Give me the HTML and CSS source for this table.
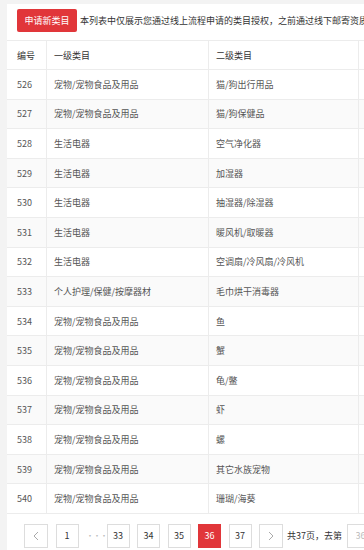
FILE: index.html
```html
<!DOCTYPE html>
<html lang="zh-CN">
<head>
<meta charset="utf-8">
<title>类目授权</title>
<link rel="stylesheet" href="styles.css">
</head>
<body>
<div class="page">
  <div class="panel">
    <div class="toolbar">
      <button class="btn-apply">申请新类目</button>
      <span class="notice">本列表中仅展示您通过线上流程申请的类目授权，之前通过线下邮寄资质</span>
    </div>
    <div class="table">
      <div class="row head">
        <div class="cell c1">编号</div>
        <div class="cell c2">一级类目</div>
        <div class="cell c3">二级类目</div>
        <div class="cell c4"></div>
      </div>
      <div class="row"><div class="cell c1">526</div><div class="cell c2">宠物/宠物食品及用品</div><div class="cell c3">猫/狗出行用品</div><div class="cell c4"></div></div>
      <div class="row odd"><div class="cell c1">527</div><div class="cell c2">宠物/宠物食品及用品</div><div class="cell c3">猫/狗保健品</div><div class="cell c4"></div></div>
      <div class="row"><div class="cell c1">528</div><div class="cell c2">生活电器</div><div class="cell c3">空气净化器</div><div class="cell c4"></div></div>
      <div class="row odd"><div class="cell c1">529</div><div class="cell c2">生活电器</div><div class="cell c3">加湿器</div><div class="cell c4"></div></div>
      <div class="row"><div class="cell c1">530</div><div class="cell c2">生活电器</div><div class="cell c3">抽湿器/除湿器</div><div class="cell c4"></div></div>
      <div class="row odd"><div class="cell c1">531</div><div class="cell c2">生活电器</div><div class="cell c3">暖风机/取暖器</div><div class="cell c4"></div></div>
      <div class="row"><div class="cell c1">532</div><div class="cell c2">生活电器</div><div class="cell c3">空调扇/冷风扇/冷风机</div><div class="cell c4"></div></div>
      <div class="row odd"><div class="cell c1">533</div><div class="cell c2">个人护理/保健/按摩器材</div><div class="cell c3">毛巾烘干消毒器</div><div class="cell c4"></div></div>
      <div class="row"><div class="cell c1">534</div><div class="cell c2">宠物/宠物食品及用品</div><div class="cell c3">鱼</div><div class="cell c4"></div></div>
      <div class="row odd"><div class="cell c1">535</div><div class="cell c2">宠物/宠物食品及用品</div><div class="cell c3">蟹</div><div class="cell c4"></div></div>
      <div class="row"><div class="cell c1">536</div><div class="cell c2">宠物/宠物食品及用品</div><div class="cell c3">龟/鳖</div><div class="cell c4"></div></div>
      <div class="row odd"><div class="cell c1">537</div><div class="cell c2">宠物/宠物食品及用品</div><div class="cell c3">虾</div><div class="cell c4"></div></div>
      <div class="row"><div class="cell c1">538</div><div class="cell c2">宠物/宠物食品及用品</div><div class="cell c3">螺</div><div class="cell c4"></div></div>
      <div class="row odd"><div class="cell c1">539</div><div class="cell c2">宠物/宠物食品及用品</div><div class="cell c3">其它水族宠物</div><div class="cell c4"></div></div>
      <div class="row"><div class="cell c1">540</div><div class="cell c2">宠物/宠物食品及用品</div><div class="cell c3">珊瑚/海葵</div><div class="cell c4"></div></div>
    </div>
    <div class="pager">
      <a class="pg arrow"><svg width="6" height="10" viewBox="0 0 6 10"><path d="M5 1 L1 5 L5 9" fill="none" stroke="#aaa" stroke-width="1"/></svg></a>
      <a class="pg">1</a>
      <span class="dots">···</span>
      <a class="pg">33</a>
      <a class="pg">34</a>
      <a class="pg">35</a>
      <a class="pg current">36</a>
      <a class="pg">37</a>
      <a class="pg arrow"><svg width="6" height="10" viewBox="0 0 6 10"><path d="M1 1 L5 5 L1 9" fill="none" stroke="#aaa" stroke-width="1"/></svg></a>
      <span class="total">共37页，去第</span>
      <input class="goto" type="text" placeholder="36">
    </div>
  </div>
</div>
</body>
</html>
```

FILE: styles.css
```css
html, body {
  margin: 0;
  padding: 0;
  overflow: hidden;
  background: #f3f3f3;
}
body {
  font-family: "Noto Sans CJK SC", "Noto Sans", sans-serif;
  font-size: 9px;
  color: #555;
}
.page {
  padding: 4px 0 0 7px;
}
.panel {
  width: 720px;
  background: #fff;
  padding-top: 5px;
  padding-bottom: 6px;
}
.toolbar {
  display: flex;
  align-items: center;
  padding-left: 10px;
  height: 23px;
  gap: 3px;
  white-space: nowrap;
}
.btn-apply {
  height: 23px;
  width: 60px;
  padding: 0;
  border: none;
  border-radius: 2px;
  background: #e1363a;
  color: #fff;
  font-family: inherit;
  font-size: 9px;
}
.notice {
  color: #333;
  font-size: 9px;
}
.table {
  margin-top: 8px;
  border-top: 1px solid #ececec;
}
.row {
  display: grid;
  grid-template-columns: 40px 162px 150px 1fr;
  height: 29.6px;
  box-sizing: border-box;
  border-bottom: 1px solid #ececec;
  background: #fff;
}
.row.head {
  height: 29px;
  color: #333;
}
.row.odd {
  background: #fafafa;
}
.cell {
  display: flex;
  align-items: center;
  border-right: 1px solid #ececec;
  padding-left: 7px;
  white-space: nowrap;
}
.cell.c1 {
  padding-left: 10px;
}
.pager {
  display: flex;
  align-items: center;
  gap: 7.5px;
  padding-left: 17px;
  margin-top: 10px;
}
.pg {
  box-sizing: border-box;
  width: 23px;
  height: 24px;
  border: 1px solid #ddd;
  display: flex;
  align-items: center;
  justify-content: center;
  color: #333;
  font-size: 9px;
  background: #fff;
}
.pg.current {
  background: #e1363a;
  border-color: #e1363a;
  color: #fff;
}
.pg.arrow {
  width: 24px;
}
.dots {
  width: 13px;
  text-align: center;
  color: #bbb;
  font-size: 8px;
  letter-spacing: -1px;
}
.total {
  color: #333;
  font-size: 9px;
  margin-left: -3.5px;
  white-space: nowrap;
}
.goto {
  box-sizing: border-box;
  width: 40px;
  height: 24px;
  border: 1px solid #ddd;
  padding: 0 0 0 8px;
  font-family: inherit;
  font-size: 9px;
  margin-left: -3px;
}
.goto::placeholder {
  color: #bbb;
}
```
